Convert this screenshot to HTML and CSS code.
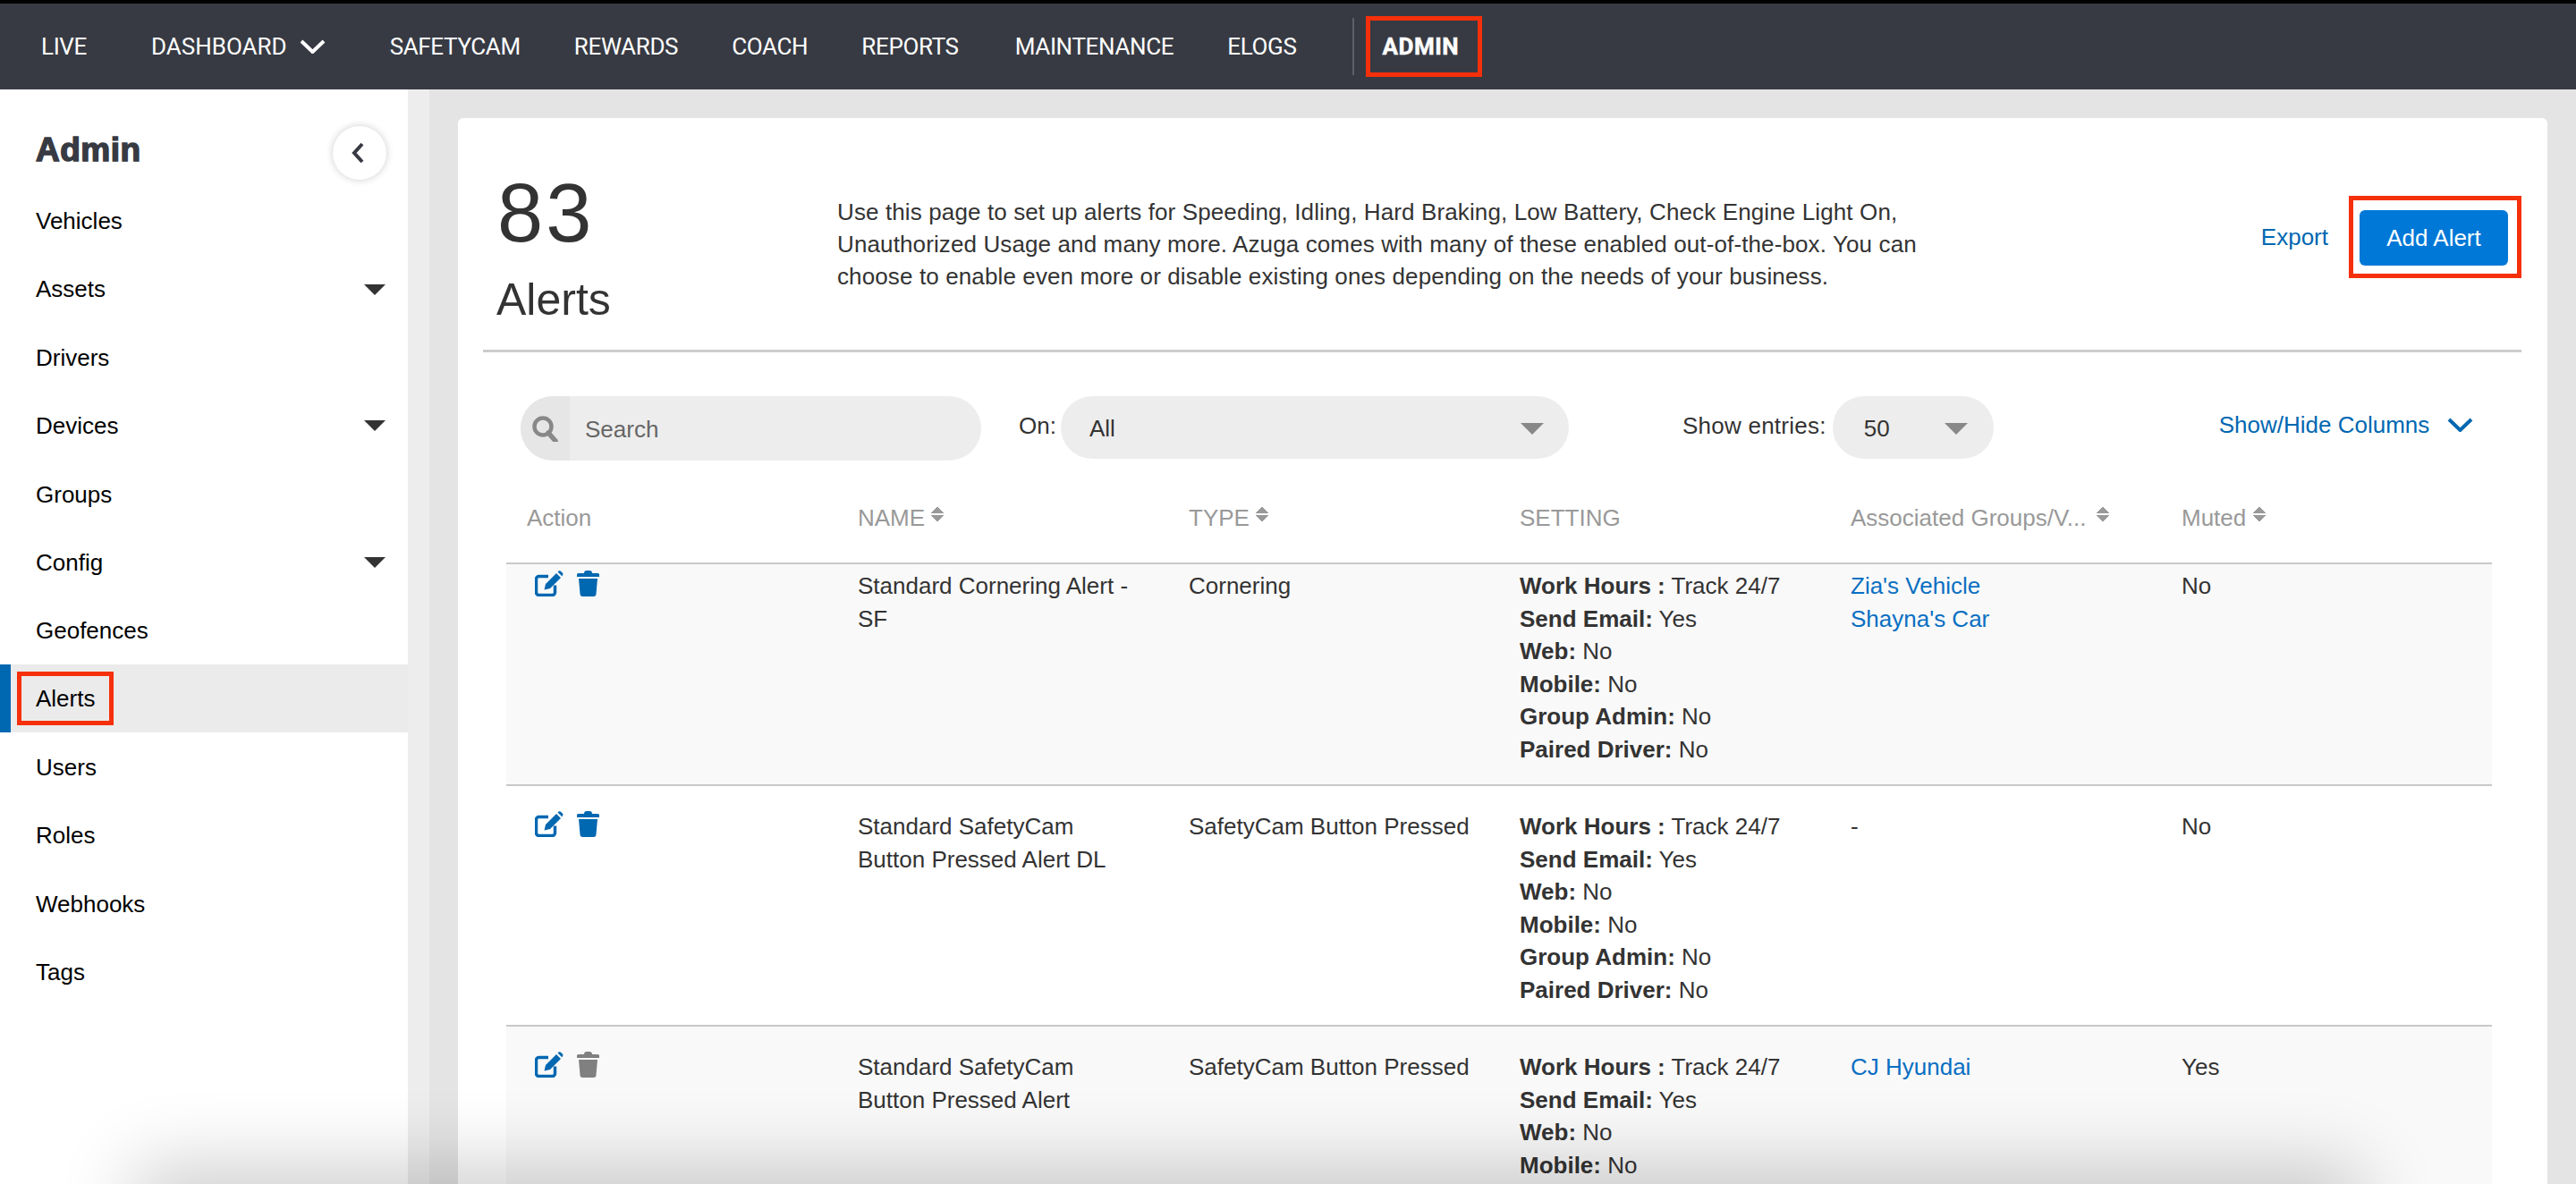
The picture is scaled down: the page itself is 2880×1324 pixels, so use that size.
FILE: index.html
```html
<!DOCTYPE html>
<html lang="en">
<head>
    <meta charset="UTF-8">
    <meta name="viewport" content="width=device-width, initial-scale=1.0">
    <title>Admin - Alerts</title>
    <link rel="stylesheet" href="styles.css">
</head>
<body>

<div class="topnav">
    <a class="nav-link nav-live">LIVE</a>
    <a class="nav-link nav-dash">DASHBOARD
        <svg class="nav-chevron" viewBox="0 0 29 16"><path d="M2 2l12.5 12L27 2" fill="none" stroke="#fff" stroke-width="4"/></svg>
    </a>
    <a class="nav-link">SAFETYCAM</a>
    <a class="nav-link">REWARDS</a>
    <a class="nav-link">COACH</a>
    <a class="nav-link">REPORTS</a>
    <a class="nav-link nav-maint">MAINTENANCE</a>
    <a class="nav-link">ELOGS</a>
    <div class="nav-sep"></div>
    <a class="nav-link nav-admin">ADMIN</a>
</div>

<div class="page">
    <div class="sidebar">
        <div class="side-head">
            <div class="side-title">Admin</div>
            <div class="side-toggle">
                <svg viewBox="0 0 14 24" class="toggle-icon"><path d="M12 2L3 12l9 10" fill="none" stroke="#373a43" stroke-width="4"/></svg>
            </div>
        </div>
        <div class="side-item">Vehicles</div>
        <div class="side-item">Assets <span class="caret"></span></div>
        <div class="side-item">Drivers</div>
        <div class="side-item">Devices <span class="caret"></span></div>
        <div class="side-item">Groups</div>
        <div class="side-item">Config <span class="caret"></span></div>
        <div class="side-item">Geofences</div>
        <div class="side-item side-active"><span class="side-mark">Alerts</span></div>
        <div class="side-item">Users</div>
        <div class="side-item">Roles</div>
        <div class="side-item">Webhooks</div>
        <div class="side-item">Tags</div>
    </div>

    <div class="main">
        <div class="card">
            <div class="card-head">
                <div class="count-box">
                    <div class="count">83</div>
                    <div class="count-label">Alerts</div>
                </div>
                <p class="intro">Use this page to set up alerts for Speeding, Idling, Hard Braking, Low Battery, Check Engine Light On,<br>Unauthorized Usage and many more. Azuga comes with many of these enabled out-of-the-box. You can<br>choose to enable even more or disable existing ones depending on the needs of your business.</p>
                <div class="head-actions">
                    <a class="export">Export</a>
                    <div class="add-mark"><button class="add-btn">Add Alert</button></div>
                </div>
            </div>

            <div class="filters">
                <div class="search">
                    <div class="search-icon">
                        <svg viewBox="0 0 29 29" width="29" height="29"><circle cx="12" cy="12" r="9.5" fill="none" stroke="#888" stroke-width="4.5"/><path d="M18 19l8 9" stroke="#888" stroke-width="5.5" stroke-linecap="round"/></svg>
                    </div>
                    <span class="search-text">Search</span>
                </div>
                <span class="filter-label on-label">On:</span>
                <div class="select select-on">All <span class="select-caret"></span></div>
                <span class="filter-label entries-label">Show entries:</span>
                <div class="select select-entries">50 <span class="select-caret"></span></div>
                <a class="columns-link">Show/Hide Columns
                    <svg viewBox="0 0 29 16" class="columns-chevron"><path d="M2 2l12.5 12L27 2" fill="none" stroke="#0067b1" stroke-width="4"/></svg>
                </a>
            </div>

            <div class="table">
                <div class="row head-row">
                    <div class="cell">Action</div>
                    <div class="cell">NAME <span class="sort"></span></div>
                    <div class="cell">TYPE <span class="sort"></span></div>
                    <div class="cell">SETTING</div>
                    <div class="cell">Associated Groups/V... <span class="sort sort-far"></span></div>
                    <div class="cell">Muted <span class="sort"></span></div>
                </div>
                <div class="table-body">
                    <div class="rows-scrolled">
                        <div class="row data-row shaded">
                            <div class="cell actions">
                                <svg class="icon-edit" viewBox="0 0 32 29"><path d="M15 6.500H4.500a3 3 0 0 0-3 3v15a3 3 0 0 0 3 3h15a3 3 0 0 0 3-3v-8" fill="none" stroke="#0067b1" stroke-width="3.500"/><path d="M12 15L24 3l5 5-12 12-6.500 1.500zM25.500 1.500L27 .3q1-.5 2 .5l2 2q1 1 0 2l-.5 1.700z" fill="#0067b1"/></svg>
                                <svg class="icon-trash" viewBox="0 0 25 29"><path d="M8 3q0-3 3-3h3q3 0 3 3h6.500q1.500 0 1.500 1.500V7H0V4.500Q0 3 1.500 3zM2 9h21l-1.500 17a3 3 0 0 1-3 3h-12a3 3 0 0 1-3-3z" fill="#0067b1"/></svg>
                            </div>
                            <div class="cell">Standard Cornering Alert -<br>SF</div>
                            <div class="cell">Cornering</div>
                            <div class="cell">
                                <b>Work Hours :</b> Track 24/7<br>
                                <b>Send Email:</b> Yes<br>
                                <b>Web:</b> No<br>
                                <b>Mobile:</b> No<br>
                                <b>Group Admin:</b> No<br>
                                <b>Paired Driver:</b> No
                            </div>
                            <div class="cell"><a class="link">Zia's Vehicle</a><br><a class="link">Shayna's Car</a></div>
                            <div class="cell">No</div>
                        </div>
                        <div class="row data-row">
                            <div class="cell actions">
                                <svg class="icon-edit" viewBox="0 0 32 29"><path d="M15 6.500H4.500a3 3 0 0 0-3 3v15a3 3 0 0 0 3 3h15a3 3 0 0 0 3-3v-8" fill="none" stroke="#0067b1" stroke-width="3.500"/><path d="M12 15L24 3l5 5-12 12-6.500 1.500zM25.500 1.500L27 .3q1-.5 2 .5l2 2q1 1 0 2l-.5 1.700z" fill="#0067b1"/></svg>
                                <svg class="icon-trash" viewBox="0 0 25 29"><path d="M8 3q0-3 3-3h3q3 0 3 3h6.500q1.500 0 1.500 1.500V7H0V4.500Q0 3 1.500 3zM2 9h21l-1.500 17a3 3 0 0 1-3 3h-12a3 3 0 0 1-3-3z" fill="#0067b1"/></svg>
                            </div>
                            <div class="cell">Standard SafetyCam<br>Button Pressed Alert DL</div>
                            <div class="cell">SafetyCam Button Pressed</div>
                            <div class="cell">
                                <b>Work Hours :</b> Track 24/7<br>
                                <b>Send Email:</b> Yes<br>
                                <b>Web:</b> No<br>
                                <b>Mobile:</b> No<br>
                                <b>Group Admin:</b> No<br>
                                <b>Paired Driver:</b> No
                            </div>
                            <div class="cell">-</div>
                            <div class="cell">No</div>
                        </div>
                        <div class="row data-row shaded">
                            <div class="cell actions">
                                <svg class="icon-edit" viewBox="0 0 32 29"><path d="M15 6.500H4.500a3 3 0 0 0-3 3v15a3 3 0 0 0 3 3h15a3 3 0 0 0 3-3v-8" fill="none" stroke="#0067b1" stroke-width="3.500"/><path d="M12 15L24 3l5 5-12 12-6.500 1.500zM25.500 1.500L27 .3q1-.5 2 .5l2 2q1 1 0 2l-.5 1.700z" fill="#0067b1"/></svg>
                                <svg class="icon-trash" viewBox="0 0 25 29"><path d="M8 3q0-3 3-3h3q3 0 3 3h6.500q1.500 0 1.500 1.500V7H0V4.500Q0 3 1.500 3zM2 9h21l-1.500 17a3 3 0 0 1-3 3h-12a3 3 0 0 1-3-3z" fill="#808080"/></svg>
                            </div>
                            <div class="cell">Standard SafetyCam<br>Button Pressed Alert</div>
                            <div class="cell">SafetyCam Button Pressed</div>
                            <div class="cell">
                                <b>Work Hours :</b> Track 24/7<br>
                                <b>Send Email:</b> Yes<br>
                                <b>Web:</b> No<br>
                                <b>Mobile:</b> No
                            </div>
                            <div class="cell"><a class="link">CJ Hyundai</a></div>
                            <div class="cell">Yes</div>
                        </div>
                    </div>
                </div>
            </div>
        </div>
    </div>
</div>

<div class="bottom-shadow"></div>

</body>
</html>
```

FILE: styles.css
```css
* {
    margin: 0;
    padding: 0;
    box-sizing: border-box;
}

body {
    height: 1324px;
    overflow: hidden;
    display: flex;
    flex-direction: column;
    position: relative;
    font-family: 'Liberation Sans', Arial, sans-serif;
    font-size: 26px;
    line-height: 36.5px;
    color: #333;
    background: #fff;
}

/* Top navigation */
.topnav {
    height: 100px;
    flex: none;
    display: flex;
    align-items: center;
    gap: 60px;
    padding-left: 46px;
    background: #373a43;
    border-top: 4px solid #000;
    color: #fff;
    font-family: 'Roboto', 'Liberation Sans', sans-serif;
}

.nav-link {
    display: flex;
    align-items: center;
    letter-spacing: -0.35px;
}

.nav-live {
    margin-right: 12px;
}

.nav-dash {
    letter-spacing: 0;
}

.nav-chevron {
    width: 29px;
    height: 16px;
    margin-left: 14px;
    margin-right: 12px;
}

.nav-maint {
    margin-left: 3px;
}

.nav-sep {
    width: 2px;
    height: 64px;
    margin-left: 2px;
    background: #5c5f67;
}

.nav-admin {
    margin-left: -47px;
    padding: 0 21px 0 14px;
    height: 68px;
    border: 5px solid #f5300a;
    font-weight: bold;
    letter-spacing: 0.5px;
    -webkit-text-stroke: 0.5px #fff;
}

.page {
    flex: 1;
    display: flex;
    min-height: 0;
}

/* Sidebar */
.sidebar {
    width: 456px;
    flex: none;
    background: #fff;
    color: #000;
}

.side-head {
    height: 108px;
    display: flex;
    justify-content: space-between;
    padding: 40px 24px 0 40px;
}

.side-title {
    font-size: 37px;
    line-height: 56px;
    font-weight: bold;
    letter-spacing: 0.5px;
    color: #373a43;
    -webkit-text-stroke: 1.5px #373a43;
}

.side-toggle {
    width: 60px;
    height: 60px;
    margin-top: 1px;
    border-radius: 50%;
    background: #fff;
    box-shadow: 0 0 8px rgba(0, 0, 0, 0.2);
    display: flex;
    align-items: center;
    justify-content: center;
}

.toggle-icon {
    width: 14px;
    height: 24px;
    margin-left: -4px;
}

.side-item {
    height: 76.4px;
    display: flex;
    align-items: center;
    justify-content: space-between;
    padding: 2px 25px 0 40px;
}

.side-active {
    padding-top: 0;
    background: #ebebeb;
    box-shadow: inset 12px 0 0 #0067b1;
}

.side-mark {
    margin-left: -21px;
    padding: 0 16px;
    height: 60px;
    display: flex;
    align-items: center;
    border: 5px solid #f5300a;
}

.caret {
    width: 0;
    height: 0;
    border-left: 12px solid transparent;
    border-right: 12px solid transparent;
    border-top: 12px solid #333;
}

/* Main area */
.main {
    flex: 1;
    min-width: 0;
    display: flex;
    padding: 32px 32px 0;
    background: #e4e4e4;
    border-left: 24px solid #ededed;
}

.card {
    flex: 1;
    min-width: 0;
    background: #fff;
    border-radius: 6px 6px 0 0;
    overflow: hidden;
}

.card-head {
    height: 262px;
    margin: 0 29px 0 28px;
    display: flex;
    border-bottom: 3px solid #ccc;
}

.count-box {
    width: 396px;
    flex: none;
    padding: 60px 0 0 16px;
}

.count {
    font-size: 92px;
    line-height: 92px;
    letter-spacing: 3px;
    color: #333;
}

.count-label {
    font-size: 50px;
    line-height: 60px;
    margin-top: 21px;
    margin-left: -1px;
}

.intro {
    flex: 1;
    padding-top: 87px;
    line-height: 36px;
    letter-spacing: 0.12px;
    white-space: nowrap;
}

.head-actions {
    display: flex;
    align-items: center;
    gap: 23px;
    height: 92px;
    margin-top: 87px;
}

.export {
    color: #0067b1;
}

.add-mark {
    padding: 11px 10px 9px 7px;
    border: 5px solid #f5300a;
}

.add-btn {
    display: block;
    width: 166px;
    height: 62px;
    border: none;
    border-radius: 6px;
    background: #0078d7;
    color: #fff;
    font: inherit;
}

/* Filters */
.filters {
    display: flex;
    align-items: flex-start;
    margin: 49px 0 0 70px;
}

.search {
    width: 515px;
    height: 72px;
    display: flex;
    align-items: center;
    border-radius: 36px;
    background: #ededed;
    overflow: hidden;
}

.search-icon {
    width: 55px;
    height: 100%;
    padding-left: 13px;
    display: flex;
    align-items: center;
    background: #e6e6e6;
}

.search-text {
    margin-left: 17px;
    padding-top: 2px;
    color: #666;
}

.filter-label {
    line-height: 66px;
}

.on-label {
    margin-left: 42px;
    margin-right: 5px;
}

.select {
    height: 70px;
    display: flex;
    align-items: center;
    justify-content: space-between;
    border-radius: 35px;
    background: #ededed;
}

.select-on {
    width: 568px;
    padding: 2px 28px 0 32px;
}

.select-entries {
    width: 180px;
    padding: 2px 29px 0 35px;
}

.select-caret {
    width: 0;
    height: 0;
    border-left: 13px solid transparent;
    border-right: 13px solid transparent;
    border-top: 13px solid #888;
}

.entries-label {
    margin-left: 127px;
    margin-right: 7px;
    letter-spacing: 0.25px;
}

.columns-link {
    margin-left: 252px;
    display: flex;
    align-items: center;
    gap: 20px;
    line-height: 64px;
    color: #0067b1;
}

.columns-chevron {
    width: 29px;
    height: 16px;
}

/* Table */
.table {
    width: 2220px;
    margin: 24px 0 0 54px;
}

.row {
    display: grid;
    grid-template-columns: repeat(6, 370px);
}

.cell {
    padding-left: 23px;
    white-space: nowrap;
}

.head-row {
    height: 92px;
    padding-top: 22px;
    border-bottom: 2px solid #c8c8c8;
    color: #999;
}

.sort {
    display: inline-block;
    width: 14px;
    height: 18px;
    vertical-align: 4px;
    background:
        linear-gradient(to bottom right, transparent 50%, #999 50%) 0 0 / 7px 8px no-repeat,
        linear-gradient(to bottom left, transparent 50%, #999 50%) 7px 0 / 7px 8px no-repeat,
        linear-gradient(to top right, transparent 50%, #999 50%) 0 10px / 7px 8px no-repeat,
        linear-gradient(to top left, transparent 50%, #999 50%) 7px 10px / 7px 8px no-repeat;
}

.sort-far {
    margin-left: 4px;
}

.table-body {
    overflow: hidden;
}

/* the list is scrolled a little, first row is cut off */
.rows-scrolled {
    margin-top: -21px;
}

.data-row {
    height: 269px;
    padding-top: 27px;
    border-bottom: 2px solid #c8c8c8;
}

.shaded {
    background: #f9f9f9;
}

.actions {
    display: flex;
    gap: 15px;
    align-items: flex-start;
    padding-left: 32px;
    padding-top: 1px;
}

.icon-edit {
    width: 32px;
    height: 29px;
}

.icon-trash {
    width: 25px;
    height: 29px;
}

.link {
    color: #0a6fc2;
}

/* soft shadow that comes up from the bottom of the window */
.bottom-shadow {
    position: absolute;
    left: 170px;
    right: 260px;
    bottom: -60px;
    height: 60px;
    box-shadow: 0 0 85px 20px rgba(0, 0, 0, 0.2);
    pointer-events: none;
}
```
